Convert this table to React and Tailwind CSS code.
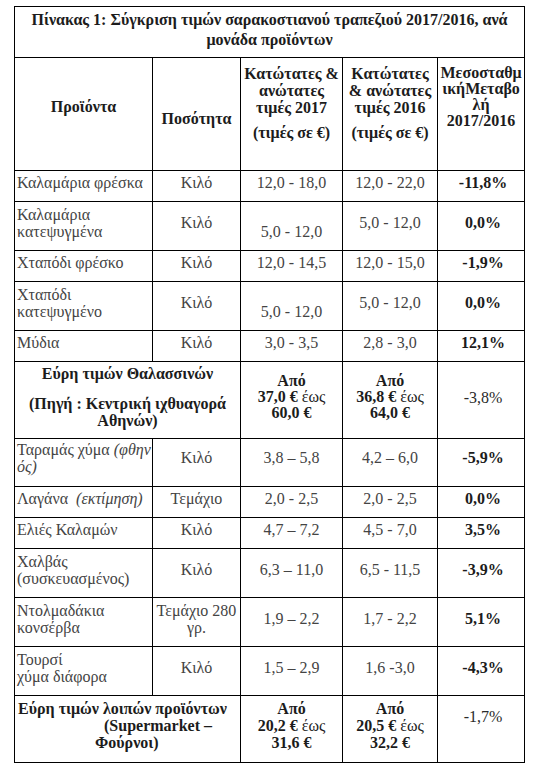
export default function App() {
  const b = "border border-black p-0";
  const body = "align-middle pb-[7px] leading-[17px]";
  const c1 = `${b} ${body} pl-[2px] text-left`;
  const cc = `${b} ${body} text-center`;
  const pc = `${b} ${body} text-center font-bold text-[#1c1c1c] pl-[4px]`;

  const Row = ({ h, p, q, a, bb, pct, extra = "" }) => (
    <tr className={h}>
      <td className={`${c1} ${extra}`}>{p}</td>
      <td className={`${cc} ${extra}`}>{q}</td>
      <td className={`${cc} ${extra}`}>{a}</td>
      <td className={`${cc} ${extra}`}>{bb}</td>
      <td className={`${pc} ${extra}`}>{pct}</td>
    </tr>
  );

  return (
    <div className="min-h-[774px] w-[540px] bg-white pl-[14px] pt-[6px] font-['Liberation_Serif','Times_New_Roman',serif] text-[16px] text-[#444444]">
      <table className="w-[510px] table-fixed border-collapse">
        <colgroup>
          <col className="w-[138px]" />
          <col className="w-[88px]" />
          <col className="w-[102px]" />
          <col className="w-[95px]" />
          <col className="w-[87px]" />
        </colgroup>
        <tbody>
          <tr className="h-[51px]">
            <td colSpan={5} className={`${b} align-top pt-[3px] text-center font-bold leading-[20px] text-[#1c1c1c]`}>
              <div className="whitespace-nowrap">Πίνακας 1: Σύγκριση τιμών σαρακοστιανού τραπεζιού 2017/2016, ανά</div>
              <div>μονάδα προϊόντων</div>
            </td>
          </tr>
          <tr className="h-[113px] font-bold text-[#1c1c1c]">
            <td className={`${b} align-top pt-[40px] text-center leading-[17px]`}>Προϊόντα</td>
            <td className={`${b} align-top pt-[52px] text-center leading-[17px]`}>Ποσότητα</td>
            <td className={`${b} align-top pt-[7px] text-center leading-[17px]`}>
              <div>Κατώτατες &amp;</div>
              <div>ανώτατες</div>
              <div>τιμές 2017</div>
              <div className="mt-[8px]">(τιμές σε €)</div>
            </td>
            <td className={`${b} align-top pt-[7px] text-center leading-[17px]`}>
              <div>Κατώτατες</div>
              <div>&amp; ανώτατες</div>
              <div>τιμές 2016</div>
              <div className="mt-[8px]">(τιμές σε €)</div>
            </td>
            <td className={`${b} align-top pt-[7px] text-center leading-[16px]`}>
              <div>Μεσοσταθμ</div>
              <div>ικήΜεταβο</div>
              <div>λή</div>
              <div>2017/2016</div>
            </td>
          </tr>
          <Row h="h-[31px]" p="Καλαμάρια φρέσκα" q="Κιλό" a="12,0 - 18,0" bb="12,0 - 22,0" pct="-11,8%" />
          <Row
            h="h-[49px]"
            p={<>Καλαμάρια<br />κατεψυγμένα</>}
            q="Κιλό"
            a={<><br />5,0 - 12,0</>}
            bb="5,0 - 12,0"
            pct="0,0%"
          />
          <Row h="h-[31px]" p="Χταπόδι φρέσκο" q="Κιλό" a="12,0 - 14,5" bb="12,0 - 15,0" pct="-1,9%" />
          <Row
            h="h-[49px]"
            p={<>Χταπόδι<br />κατεψυγμένο</>}
            q="Κιλό"
            a={<><br />5,0 - 12,0</>}
            bb="5,0 - 12,0"
            pct="0,0%"
          />
          <Row h="h-[31px]" p="Μύδια" q="Κιλό" a="3,0 - 3,5" bb="2,8 - 3,0" pct="12,1%" />
          <tr className="h-[77px]">
            <td colSpan={2} className={`${b} align-middle pb-[6px] text-center font-bold leading-[17px] text-[#1c1c1c]`}>
              <div>Εύρη τιμών Θαλασσινών</div>
              <div className="mt-[13px]">(Πηγή : Κεντρική ιχθυαγορά</div>
              <div>Αθηνών)</div>
            </td>
            <td className={`${b} align-middle pb-[6px] text-center font-bold leading-[16px] text-[#1c1c1c]`}>
              <div>Από</div>
              <div>37,0 € <span className="font-normal">έως</span></div>
              <div>60,0 €</div>
            </td>
            <td className={`${b} align-middle pb-[6px] text-center font-bold leading-[16px] text-[#1c1c1c]`}>
              <div>Από</div>
              <div>36,8 € <span className="font-normal">έως</span></div>
              <div>64,0 €</div>
            </td>
            <td className={`${b} align-middle pb-[6px] pl-[4px] text-center leading-[17px] text-[#2a2a2a]`}>-3,8%</td>
          </tr>
          <Row
            h="h-[48px]"
            extra="pb-[10px]"
            p={<>Ταραμάς χύμα <i>(φθην</i><br /><i>ός)</i></>}
            q="Κιλό"
            a="3,8 – 5,8"
            bb="4,2 – 6,0"
            pct="-5,9%"
          />
          <Row
            h="h-[31px]"
            p={<>Λαγάνα&nbsp; <i>(εκτίμηση)</i></>}
            q="Τεμάχιο"
            a="2,0 - 2,5"
            bb="2,0 - 2,5"
            pct="0,0%"
          />
          <Row h="h-[31px]" p="Ελιές Καλαμών" q="Κιλό" a="4,7 – 7,2" bb="4,5 - 7,0" pct="3,5%" />
          <Row
            h="h-[49px]"
            p={<>Χαλβάς<br />(συσκευασμένος)</>}
            q="Κιλό"
            a="6,3 – 11,0"
            bb="6,5 - 11,5"
            pct="-3,9%"
          />
          <Row
            h="h-[49px]"
            p={<>Ντολμαδάκια<br />κονσέρβα</>}
            q={<>Τεμάχιο 280<br />γρ.</>}
            a="1,9 – 2,2"
            bb="1,7 - 2,2"
            pct="5,1%"
          />
          <Row
            h="h-[49px]"
            p={<>Τουρσί<br />χύμα διάφορα</>}
            q="Κιλό"
            a="1,5 – 2,9"
            bb="1,6 -3,0"
            pct="-4,3%"
          />
          <tr className="h-[67px]">
            <td colSpan={2} className={`${b} align-middle pb-[7px] pl-[3px] text-left font-bold leading-[17px] text-[#1c1c1c]`}>
              <div className="whitespace-nowrap">Εύρη τιμών λοιπών προϊόντων</div>
              <div className="pl-[86px]">(Supermarket –</div>
              <div className="pl-[77px]">Φούρνοι)</div>
            </td>
            <td className={`${b} align-middle pb-[7px] text-center font-bold leading-[17px] text-[#1c1c1c]`}>
              <div>Από</div>
              <div>20,2 € <span className="font-normal">έως</span></div>
              <div>31,6 €</div>
            </td>
            <td className={`${b} align-middle pb-[7px] text-center font-bold leading-[17px] text-[#1c1c1c]`}>
              <div>Από</div>
              <div>20,5 € <span className="font-normal">έως</span></div>
              <div>32,2 €</div>
            </td>
            <td className={`${b} align-middle pb-[25px] pl-[4px] text-center leading-[17px] text-[#2a2a2a]`}>-1,7%</td>
          </tr>
        </tbody>
      </table>
    </div>
  );
}
